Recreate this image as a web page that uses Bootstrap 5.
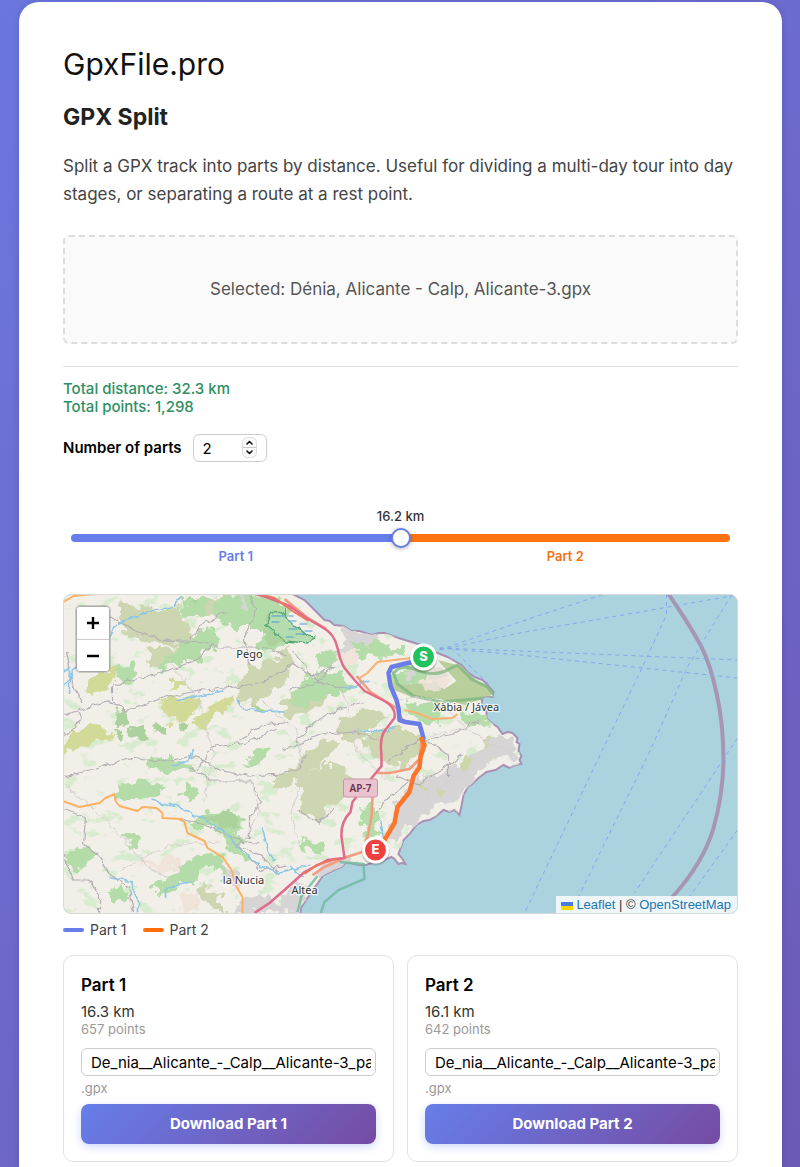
<!DOCTYPE html>
<html lang="en">
<head>
<meta charset="utf-8">
<meta name="viewport" content="width=device-width, initial-scale=1">
<title>GPX Split – GpxFile.pro</title>
<link href="https://cdn.jsdelivr.net/npm/bootstrap@5.3.0/dist/css/bootstrap.min.css" rel="stylesheet">
<style>
  body { font-family: Inter, "Liberation Sans", sans-serif; color: #000; background: linear-gradient(135deg, #6b77de, #6d5ab6) no-repeat; min-height: 100vh; padding: 2px 18px 0 19px; }
  .sheet { background: #fff; border-radius: 20px 20px 0 0; padding: 44px 44px 5px; min-height: calc(100vh - 2px); box-shadow: 0 0 6px rgba(40, 30, 120, .2); }
  .site-name { font-size: 30px; line-height: 36px; color: #111; }
  .tool-name { font-size: 23px; line-height: 30px; font-weight: 700; color: #222; margin: 20px 0; }
  .intro { font-size: 17px; line-height: 28px; color: #444; margin-bottom: 27px; }
  .dropzone { border: 2px dashed #ddd; border-radius: 6px; background: #fafafa; color: #555; font-size: 17px; line-height: 25px; padding: 40px 16px; }
  .rule { border: 0; border-top: 1px solid #ddd; opacity: 1; margin: 22px 0 13px; }
  .stats { color: #2f8f62; font-size: 15px; line-height: 18px; font-weight: 500; margin-bottom: 18px; }
  .parts-label { font-size: 15px; font-weight: 600; margin-right: 11px; }
  .parts-box { width: 74px; }
  .field { border: 1px solid #ccc; border-radius: 6px; height: 28px; padding: 0 4px 0 9px; font-size: 15px; color: #000; width: 100%; background: #fff; }
  .field::-webkit-inner-spin-button { appearance: none; }
  .stepper { right: 9px; top: 3px; pointer-events: none; }
  .splitter { margin: 45px 8px 29px; }
  .split-value { font-size: 13px; line-height: 18px; font-weight: 500; color: #333; }
  .split-range { appearance: none; display: block; width: 100%; height: 20px; margin: 3px 0 0; background: none; }
  .split-range::-webkit-slider-runnable-track { height: 8px; border-radius: 4px; background: linear-gradient(90deg, #667eea 50%, #ff7310 50%); }
  .split-range::-webkit-slider-thumb { appearance: none; width: 20px; height: 20px; margin-top: -6px; border-radius: 50%; background: #fff; border: 2px solid #667eea; box-shadow: 0 1px 4px rgba(0, 0, 0, .3); }
  .split-names { font-size: 13px; line-height: 17px; font-weight: 600; }
  .tone-a { color: #667eea; }
  .tone-b { color: #f47316; }
  .map { height: 320px; border: 1px solid #d9d9d9; border-radius: 8px; background: #aad3df; }
  .map > svg { width: 100%; height: 100%; display: block; }
  .zoomer { left: 12px; top: 11px; border: 1px solid #aaa; border-radius: 4px; overflow: hidden; box-shadow: 0 0 0 1px rgba(0, 0, 0, .15); }
  .zoomer button { width: 32px; height: 32px; background: #fff; border: 0; padding: 0; display: flex; align-items: center; justify-content: center; }
  .zoomer button + button { border-top: 1px solid #ccc; }
  .credit { right: 0; bottom: 0; background: rgba(255, 255, 255, .8); font: 13px/17px "Liberation Sans", sans-serif; padding: 0 6px 0 5px; color: #333; }
  .credit svg { margin-right: 3px; }
  .credit a { color: #1b76b3; text-decoration: none; }
  .legend-row { font-size: 14px; line-height: 18px; color: #444; margin: 7px 0 16px; gap: 16px; }
  .swatch { width: 21px; height: 4px; border-radius: 2px; margin-right: 6px; }
  .part-grid { gap: 13px; }
  .part { flex: 1 1 0; min-width: 0; border: 1px solid #e2e2e2; border-radius: 10px; padding: 18px 17px 17px; }
  .part h3 { font-size: 17px; line-height: 22px; font-weight: 600; margin: 0 0 7px; }
  .dist { font-size: 15px; line-height: 18px; color: #333; }
  .faint { font-size: 13px; line-height: 16px; color: #999; }
  .part .field { margin: 11px 0 4px; display: block; }
  .download { display: block; width: 100%; height: 40px; margin-top: 8px; border: 0; border-radius: 8px; color: #fff; font-size: 15px; font-weight: 700; background: linear-gradient(135deg, #667eea, #764ba2); box-shadow: 0 3px 8px rgba(102, 126, 234, .3); }
</style>
</head>
<body>
<main class="sheet">
  <div class="site-name">GpxFile.pro</div>
  <h1 class="tool-name">GPX Split</h1>
  <p class="intro">Split a GPX track into parts by distance. Useful for dividing a multi-day tour into day stages, or separating a route at a rest point.</p>
  <div class="dropzone text-center">Selected: Dénia, Alicante - Calp, Alicante-3.gpx</div>
  <hr class="rule">
  <div class="stats"><div>Total distance: 32.3 km</div><div>Total points: 1,298</div></div>
  <div class="d-flex align-items-center">
    <label class="parts-label" for="parts">Number of parts</label>
    <div class="parts-box position-relative">
      <input class="field" id="parts" type="number" min="2" value="2">
      <svg class="stepper position-absolute" width="16" height="22" viewBox="0 0 16 22" fill="none" aria-hidden="true">
        <rect x=".5" y=".5" width="14" height="20" rx="5" fill="#fafafa" stroke="#ddd"/><path d="M1 10.5h13" stroke="#ccc"/>
        <path d="m5 7 2.500-2.500L10 7M5 14l2.500 2.500L10 14" stroke="#111" stroke-width="1.600" stroke-linecap="round" stroke-linejoin="round"/>
      </svg>
    </div>
  </div>

  <div class="splitter">
    <label class="split-value d-block text-center" for="split">16.2 km</label>
    <input class="split-range" id="split" type="range" min="0" max="100" value="50">
    <div class="split-names d-flex text-center"><span class="w-50 tone-a">Part 1</span><span class="w-50 tone-b">Part 2</span></div>
  </div>

  <div class="map position-relative overflow-hidden">
    <svg viewBox="64 595 674 318" preserveAspectRatio="xMidYMid slice" role="img" aria-label="Map of the route from Dénia to Calp">
      <defs>
        <filter id="rough" x="-5%" y="-5%" width="110%" height="110%"><feTurbulence type="fractalNoise" baseFrequency=".09" numOctaves="3" seed="4"/><feDisplacementMap in="SourceGraphic" scale="18" xChannelSelector="R" yChannelSelector="G"/></filter>
        <filter id="wiggle" x="-5%" y="-5%" width="110%" height="110%"><feTurbulence type="fractalNoise" baseFrequency=".12" numOctaves="2" seed="9"/><feDisplacementMap in="SourceGraphic" scale="7" xChannelSelector="R" yChannelSelector="G"/></filter>
        <filter id="speckle" x="0" y="0" width="100%" height="100%"><feTurbulence type="fractalNoise" baseFrequency=".05 .08" numOctaves="4" seed="12"/><feColorMatrix values="0 0 0 0 .68  0 0 0 0 .83  0 0 0 0 .62  9 0 0 0 -5.300"/></filter>
        <path id="coast" d="M293 594l12 6 9 9 11 11 5 1 5 4 9 1 8 5 8 0 12 4 7-2 6 0 17 6 10 3 13 4 13 7 10 4 14 8 6 7 7 5 8 3 5 5 6 7-1 5-5-1-5 1-1 6 5 9 0 6 5 5 6 4 5 7 5-2 5 1 5 5-1 4 3 2-1 7 3 5-2 4 2 4-6 1-6 3-6-3-8 5-9 2-8 6-7 7-3 1-5 9-2 11-2 9-5-5-5 2-6-2-7 6-7 4-6 1-7 4-7 9-6 6-5 14 4 5 3 5-4-1-3 1-4-5-3-2-12 5-6 0-7 3-8 0-12-3-5 5-5 2-13 6-7 10-7 10-8 12-2 9H60V594Z"/>
        <clipPath id="land"><use href="#coast"/></clipPath>
      </defs>
      <rect x="60" y="590" width="690" height="330" fill="#aad3df"/>
      <use href="#coast" fill="#f2efe9" stroke="#a991b5" stroke-width="2"/>
      <g clip-path="url(#land)">
        <rect x="60" y="590" width="480" height="330" filter="url(#speckle)"/>
        <g filter="url(#rough)">
          <g fill="#cdd6b0">
            <path d="M120 600l42 10 20-4 12 32-22 8-50-10ZM148 652l28-6 28-18 10 14-24 18-40 8ZM194 612l16-14 20-4 8 12-20 10ZM238 686l12-18 24-8 16 12-14 16-20 16-18-4ZM278 655l14-10v34l-14-8Z"/>
            <path d="M362 740l24-14 30 6 6 20-20 14-28-4ZM300 780l22-14 26 0 10 18-20 18-22 20-14-10ZM280 700l30-6 24-16 10 8-22 20-34 12ZM268 782l32-20 20-24 18 6-20 24-36 24ZM340 720l30-14 14 10-22 22-20 4ZM476 750l16-14 12 4-14 20-16 8ZM196 888l8-4 16 14 8 15h-10Z"/>
          </g>
          <g fill="#d3da98">
            <path d="M86 690l12-20 26-2-14 18-14 10ZM160 700l14-4 28 2-4 16-24 8-14-10ZM192 722l18-14 22-14 4 8-18 14-18 14ZM62 746l20-18 24-4 4 10-26 16-22 4ZM172 682l14-2 4 8-18 2Z"/>
          </g>
          <g fill="#b3dca8">
            <path d="M184 598l28 0-6 14-20 6ZM220 594l60 2 14 16-26 16-30 0-28-10ZM176 646l34-20 8 14-22 22-40 6ZM256 644l24-26 20 18-18 12-26 4ZM290 696l24-24 28 2 12 14-28 12-36 8ZM316 655l24-8 4 14-26 8ZM350 640l24-2 32 14-20 6-34-2ZM117 668l20-4 2 12-20 10ZM190 822l24-12 26 8 8 12-24 4ZM220 828l18 6 12 28-18-12ZM390 674l20-10 20 4 20 18-30 6-26-4ZM458 714l20-2 14 10-24 6ZM365 808l10-8 4 36-10 16-6-30ZM410 702l34 2-6 20-32-6Z"/>
            <path d="M118 786l20-6 28 8-16 8-34 4ZM152 758l34 2 14 10-32 4-20-6ZM184 784l12 4-4 12-12-6ZM250 756l20-6-6 14-20 2ZM68 850l18-6 10 12-18 14-10-6ZM108 892l14-8 10 10-16 10ZM154 884l22-12 30-20 10 4-20 22-34 20ZM180 864l18-8 30-4-16 14-28 10ZM210 852l10 4 14 26-12-6ZM124 834l14 0-2 12-14-6ZM300 838l26 4-4 12-20-6Z"/>
          </g>
          <g fill="#abd29c">
            <path d="M114 710l12 2 4 12-14 4ZM130 726l16 2 4 10-18-2ZM156 722l14 4-4 10-12-4ZM112 732l12 0-4 8ZM202 816l28-4 12 16-20-2ZM190 598l8 2-4 8ZM268 616l14-4 10 16-12 18-16-8ZM180 720l10 6-8 6ZM254 700l12 8-8 6Z"/>
          </g>
          <g fill="#d7d4d6">
            <path d="M340 622l20 10 20 4-10 10-24-6ZM338 646l12-6 4 10-8 10ZM240 596l8 4-6 10ZM488 745l14-10 16 8-2 14-24 4-14 12-16 18-4 12-22 4-18 12-16 14-6 12-8-4 10-34 14-24 30-12ZM404 668l14 2-8 14ZM318 868l22-12 16 4-14 10-22 8ZM236 900l24-8 26 20h-48ZM298 882l8 2-6 28-24-4ZM224 866l12 4 6 18-12-4Z"/>
          </g>
          <path d="M456 764l12-10 6 12-10 8ZM420 782l6 4-4 5ZM440 790l5 3-4 5Z" fill="#cdd6a8"/>
          <path d="M340 650l20 0-4 12-12 2ZM430 670l22 8-4 16-28-6ZM140 864l34-10 10 10-20 8ZM182 898l20-6-4 20h-18Z" fill="#f0e3da"/>
        </g>
        <path d="M438 660l24 6 14 14 12 6 6 7-6 4-22 8-26-6-28-2-20-8-3-8 16 4 20-2 20 6 12-8Z" fill="#b8cf9b"/>
        <path d="M428 664l16 4 6 8-12 5-10-5ZM422 683l14-1 5 8-14 1Z" fill="#e6e0d4" filter="url(#wiggle)"/>
        <path d="M394 673q8-9 20-4 18 8 32 2l12-6 14 14 16 8 8 10-32 3-22 2-28-6-16-12Z" fill="none" stroke="#79b47c" stroke-width="3" opacity=".7"/>
        <path d="M270 615q8-6 16 2l20 18 10 1-7 8-22-3-21-15Z" fill="#b5dcae" stroke="#56a775" stroke-width="1.500" filter="url(#wiggle)"/>
        <g fill="none" stroke="#4d9bd8" stroke-width="1"><path d="M289 621h8M300 624h8M289 629h9M296 634h10M286 637h8M305 631h8M289 616h5M272 616h14v-8M272 622h8"/></g>
        <g filter="url(#wiggle)" fill="none">
          <g stroke="#b5adb5" stroke-width="1.200">
            <path d="M110 616l24 14 28 10 28 0 14-18 24-10M64 715l20-6 25-7 20 8 40-14 36-6 30-3 30-5 28-18 20 12 24-10M165 641l40 2 14 4 46 0 22 8M112 700v-14l28-8 22-6 36-12 14-16M64 736l18-16-4-10M64 776l30-6 34-12 40 4 30-6 20 14 30 6 36-2 16-6 8-14M190 767l22 14 38 0 12 22-12 12 0 22-14 8 24 10 20 18M64 810l22 8-2 26 16 12 12 20 18 12 4 25M64 856l10 24 16 0 10 16 0 18M180 818l28 8 28 14 24 4M290 690l24-6 20-16M296 742l18-20 26-14 24-6M283 750l40-16 36-2 24 10M350 690l-32-8-24-30M390 760l30-20 30-4 30-16M395 775l24 10 24-16 20-14M425 740l24 14 0 22M375 812l14-14 20-16M300 812l20 10 16-14M240 740l22-14 28-4M232 840l30 30 26-4M250 665l-6-26 12-30-6-14M84 704l-12-22-6-30M198 770l14-22 36-6 30-14"/>
          </g>
          <g stroke="#d6d0cf" stroke-width="1"><path d="M260 700l36 30 8 44-12 40 8 30M345 690l12 60 30 30M400 700l22-4 26 14 20 20M404 760l40 30M170 660l30 44 14 50-10 50M66 784l44 40 40 44 30 20M120 870l50-24 50-4M250 780l10 30-14 30M430 736l34-8 28 14M440 776l20 14M426 800l26-20 24-6M490 744l22 8"/></g>
          <g stroke="#8dc6e8" stroke-width="1.700">
            <path d="M110 637l5-10 22-12 36-8 9-10M64 688l8-14 6-8M153 800l24 7 23 10 27 16 10 14 23 18 20 8 30-8M263 828l4 18 8 16M178 701l22-6 24-4M64 672l6-4v28M134 882l-24-4M132 882l6 20 0 12M166 896v-8l12-4 14-2M346 690l24-10M237 698l8 12 40 2M173 766l16-4 4-12M290 866l14 12M360 730l18 2 20-4M380 820l4 16"/>
          </g>
        </g>
        <g fill="none" stroke-linejoin="round">
          <path d="M285 599l22 18 20 12M357 676l14 16 26 16 6 12M378 773l12 0 20-4 10-10 2-18M373 797l-1 20-4 20-5 15-16 5-22 10-12 8" stroke="#f59b7e" stroke-width="2.500"/>
          <path d="M412 658l-34 4-10 11-8 5M405 710l13 3 14 6 21-1 5-4" stroke="#f7b274" stroke-width="2"/>
          <path d="M63 801l17 6 20-4 6-5 9-4 1 7 4 5 18 5 5-4 14 1 6 5 0 5 19 1 3 3 3 11 17 8 3 7 15 9 9 13 5 17 6 10v18M64 602l10-6 20-2" stroke="#fdb160" stroke-width="2"/>
          <path d="M252 593L267 597 290 606 307 618 324 628Q335 634 338 648T345 668L355 680 365 691 385 701Q397 708 395 718L385 731Q380 739 382 755L382 766 373 777Q358 795 353 802L351 812Q341 822 342 837L345 858Q335 859 328 860L305 872 285 890 270 903 255 913" stroke="#e16b8a" stroke-width="2.500"/>
          <path d="M253 592l22 6 18 13 16 10M305 874l12-9 20-6" stroke="#ef765e" stroke-width="2"/>
        </g>
      </g>
      <path d="M364 863l1 16-26 11-14 12-4 12M318 876l-16 20-4 16M340 862l24 2" fill="none" stroke="#6dba9d" stroke-width="2.500" opacity=".8"/>
      <path d="M669 594q22 32 33 53 9 18 15 46 7 30 7 69-1 35-10 66-10 35-42 70" fill="none" stroke="#a78bac" stroke-width="4" opacity=".85"/>
      <g fill="none" stroke="#86a6ea" stroke-width="1" stroke-dasharray="4 4">
        <path d="M440 650l80-28 85-28M440 650l80-17 218-38M440 648l80 3 218 9M440 648l80 7 218 23M452 648l38 37M667 594v21l-24 52-41 85-77 161M732 595l-44 72-38 85-79 161M738 738l-103 155M738 830l-54 75"/>
      </g>
      <g font-family="Noto Sans, sans-serif" font-size="11" fill="#333" stroke="#fff" stroke-opacity=".75" stroke-width="2.500" paint-order="stroke" text-anchor="middle">
        <text x="250" y="658">Pego</text><text x="467" y="711">Xàbia / Jávea</text><text x="244" y="884">la Nucia</text><text x="305" y="894">Altea</text>
      </g>
      <rect x="344" y="779" width="34" height="18" rx="2" fill="#e9c3ce" stroke="#c996a5"/>
      <text x="361" y="792" font-family="Noto Sans, sans-serif" font-size="10" font-weight="600" fill="#70304b" text-anchor="middle">AP-7</text>
      <g fill="none" stroke-width="4.500" stroke-linejoin="round" stroke-linecap="round">
        <path d="M418 661l-6 1-20 5-3 6 2 13 6 14 2 8 1 12 6 2 14 2 4 14" stroke="#6c7ce6"/>
        <path d="M422 739l3 6-4 12-1 10-6 9-4 16-12 15-3 16-10 17-7 9" stroke="#fb762a"/>
      </g>
      <g font-family="Inter, sans-serif" font-weight="800" font-size="13" text-anchor="middle">
        <circle cx="424" cy="658.500" r="14" fill="#000" opacity=".18"/><circle cx="424" cy="657" r="12" fill="#22c25c" stroke="#fff" stroke-width="3"/><text x="424" y="661" fill="#fff">S</text>
        <circle cx="376" cy="851.500" r="14" fill="#000" opacity=".18"/><circle cx="376" cy="850" r="12" fill="#f04141" stroke="#fff" stroke-width="3"/><text x="376" y="854" fill="#fff">E</text>
      </g>
    </svg>
    <div class="zoomer position-absolute">
      <button type="button" aria-label="Zoom in"><svg width="14" height="14" viewBox="0 0 14 14"><path d="M7 1v12M1 7h12" stroke="#000" stroke-width="2.400"/></svg></button>
      <button type="button" aria-label="Zoom out"><svg width="14" height="14" viewBox="0 0 14 14"><path d="M1 7h12" stroke="#000" stroke-width="2.400"/></svg></button>
    </div>
    <div class="credit position-absolute"><svg width="12" height="8" aria-hidden="true"><path fill="#4c7be1" d="M0 0h12v4H0z"/><path fill="#ffd500" d="M0 4h12v4H0z"/></svg><a href="#">Leaflet</a> | © <a href="#">OpenStreetMap</a></div>
  </div>

  <div class="legend-row d-flex">
    <span class="d-flex align-items-center"><span class="swatch" style="background:#667eea"></span>Part 1</span>
    <span class="d-flex align-items-center"><span class="swatch" style="background:#ff6d0a"></span>Part 2</span>
  </div>

  <div class="part-grid d-flex">
    <section class="part">
      <h3>Part 1</h3>
      <div class="dist">16.3 km</div>
      <div class="faint">657 points</div>
      <input class="field" type="text" aria-label="File name for part 1" value="De_nia__Alicante_-_Calp__Alicante-3_part1">
      <div class="faint">.gpx</div>
      <button class="download" type="button">Download Part 1</button>
    </section>
    <section class="part">
      <h3>Part 2</h3>
      <div class="dist">16.1 km</div>
      <div class="faint">642 points</div>
      <input class="field" type="text" aria-label="File name for part 2" value="De_nia__Alicante_-_Calp__Alicante-3_part2">
      <div class="faint">.gpx</div>
      <button class="download" type="button">Download Part 2</button>
    </section>
  </div>
</main>
<script src="https://cdn.jsdelivr.net/npm/bootstrap@5.3.0/dist/js/bootstrap.bundle.min.js"></script>
</body>
</html>
